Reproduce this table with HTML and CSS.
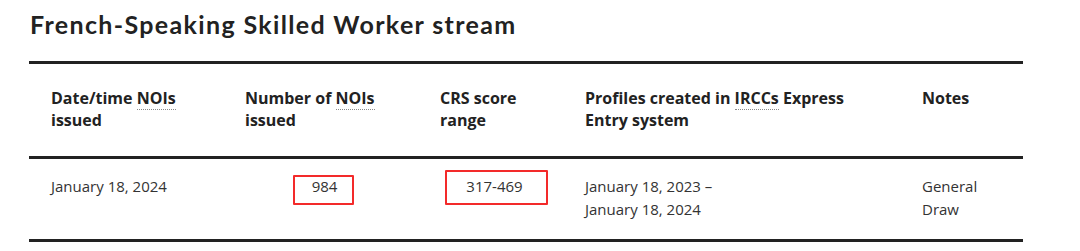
FILE: index.html
```html
<!DOCTYPE html>
<html lang="en">
<head>
<meta charset="utf-8">
<title>French-Speaking Skilled Worker stream</title>
<link rel="stylesheet" href="styles.css">
</head>
<body>
<main class="page">
  <h2 class="title">French-Speaking Skilled Worker stream</h2>
  <table class="draws">
    <colgroup>
      <col class="c1"><col class="c2"><col class="c3"><col class="c4"><col class="c5">
    </colgroup>
    <thead>
      <tr>
        <th>Date/time <abbr title="Notifications of Interest">NOIs</abbr> issued</th>
        <th>Number of <abbr title="Notifications of Interest">NOIs</abbr> issued</th>
        <th>CRS score range</th>
        <th>Profiles created in <abbr title="Immigration, Refugees and Citizenship Canada">IRCCs</abbr> Express Entry system</th>
        <th>Notes</th>
      </tr>
    </thead>
    <tbody>
      <tr>
        <td>January 18, 2024</td>
        <td class="num"><span class="hl hl-a">984</span></td>
        <td class="num"><span class="hl hl-b">317-469</span></td>
        <td>January 18, 2023 –<br>January 18, 2024</td>
        <td>General<br>Draw</td>
      </tr>
    </tbody>
  </table>
</main>
</body>
</html>
```

FILE: styles.css
```css
html, body {
  margin: 0;
  padding: 0;
  background: #ffffff;
}

.page {
  padding: 0 0 0 29px;
  font-family: "Open Sans", "Noto Sans", sans-serif;
  color: #333333;
}

.title {
  margin: 9px 0 0 1px;
  font-family: "Lato", "Open Sans", sans-serif;
  font-weight: 700;
  font-size: 25px;
  line-height: 30px;
  color: #222222;
  letter-spacing: 1.35px;
}

.draws {
  margin-top: 22px;
  width: 994px;
  table-layout: fixed;
  border-collapse: collapse;
  border-top: 3px solid #222222;
  border-bottom: 3px solid #222222;
}

.c1 { width: 194px; }
.c2 { width: 195px; }
.c3 { width: 145px; }
.c4 { width: 337px; }
.c5 { width: 123px; }

.draws th {
  text-align: left;
  vertical-align: top;
  font-weight: 700;
  font-size: 16px;
  line-height: 22px;
  color: #222222;
  padding: 23px 22px 25px 22px;
  border-bottom: 3px solid #222222;
}

.draws td {
  text-align: left;
  vertical-align: top;
  font-size: 15px;
  line-height: 22.5px;
  color: #333333;
  padding: 16px 22px 19px 22px;
}

.draws td.num {
  text-align: center;
  padding-left: 30px;
}

abbr {
  text-decoration: none;
  border-bottom: 1px dotted #8a8a8a;
}

.hl {
  position: relative;
}

.hl::after {
  content: "";
  position: absolute;
  border: 2px solid #f32a2a;
  border-radius: 1px;
}

.hl-a::after {
  left: -19px;
  right: -17px;
  top: -1px;
  bottom: -9px;
}

.hl-b::after {
  left: -21px;
  right: -25px;
  top: -6px;
  bottom: -9px;
}
```
